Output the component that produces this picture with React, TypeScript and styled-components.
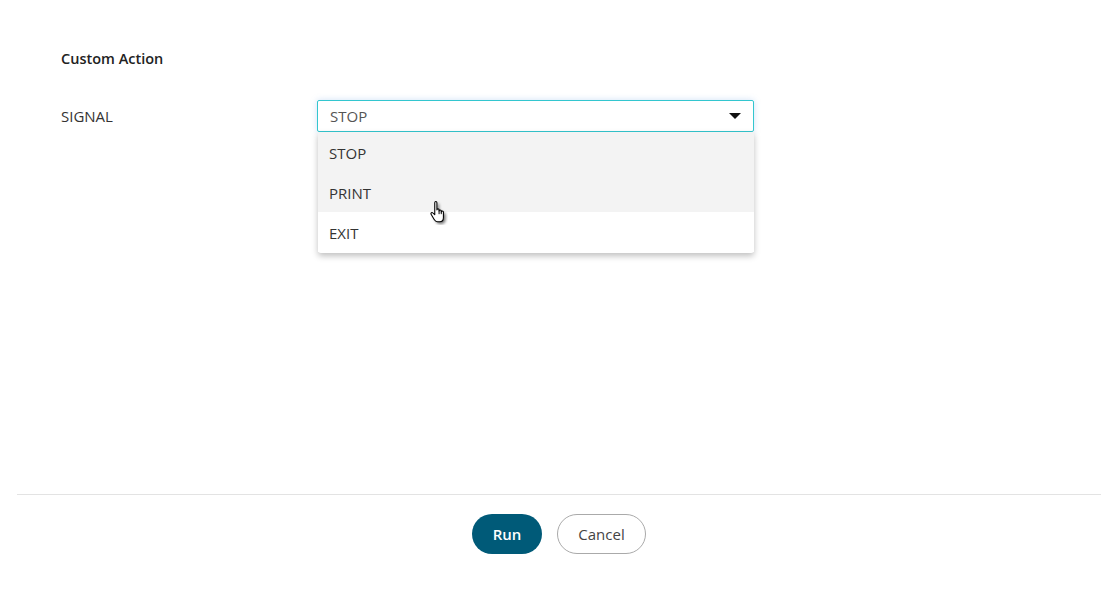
import React from "react";
import styled, { createGlobalStyle } from "styled-components";

const Global = createGlobalStyle`
  html, body { margin: 0; padding: 0; background: #fff; }
  body { font-family: "Open Sans", "Noto Sans", sans-serif; color: #333; }
`;

const options = ["STOP", "PRINT", "EXIT"];

const App = () => {
    return (
        <Page>
            <Global />
            <Body>
                <Title>Custom Action</Title>
                <Row>
                    <Label>SIGNAL</Label>
                    <SelectWrap>
                        <Select>
                            <span>STOP</span>
                            <Caret />
                        </Select>
                        <Menu>
                            {options.map((o, i) => (
                                <Item key={o} shaded={i < 2}>{o}</Item>
                            ))}
                            <Pointer>
                                <svg width="20" height="26" viewBox="0 0 18 24">
                                    <defs>
                                        <filter id="sh" x="-50%" y="-50%" width="200%" height="200%">
                                            <feGaussianBlur stdDeviation="1.3" />
                                        </filter>
                                    </defs>
                                    <path d="M6 3.5 C6 2 8 2 8 3.5 V10 C8 8.8 10 8.8 10 10 V11 C10 9.8 12 9.8 12 11 V12 C12 10.8 14 10.8 14 12 V17 C14 19.5 12.5 21 10.5 21 H8.5 C7 21 6.2 20.2 5.5 19 L2.6 14 C2 13 3.4 12 4.2 12.8 L6 14.5 Z" fill="#000" opacity="0.55" filter="url(#sh)" transform="translate(2 2)" />
                                    <path d="M6 3.5 C6 2 8 2 8 3.5 V10 C8 8.8 10 8.8 10 10 V11 C10 9.8 12 9.8 12 11 V12 C12 10.8 14 10.8 14 12 V17 C14 19.5 12.5 21 10.5 21 H8.5 C7 21 6.2 20.2 5.5 19 L2.6 14 C2 13 3.4 12 4.2 12.8 L6 14.5 Z" fill="#fff" stroke="#000" strokeWidth="1" strokeLinejoin="round" />
                                    <path d="M10 10.5 V14 M12 11.5 V14" stroke="#000" strokeWidth="0.9" />
                                </svg>
                            </Pointer>
                        </Menu>
                    </SelectWrap>
                </Row>
            </Body>
            <Footer>
                <RunButton>Run</RunButton>
                <CancelButton>Cancel</CancelButton>
            </Footer>
        </Page>
    );
};

const Page = styled.div`
    height: 590px;
    display: flex;
    flex-direction: column;
`;

const Body = styled.div`
    flex: 1;
    padding: 48px 0 0 61px;
`;

const Title = styled.div`
    font-size: 14.5px;
    font-weight: 600;
    color: #222;
    line-height: 21px;
`;

const Row = styled.div`
    display: flex;
    align-items: center;
    margin-top: 31px;
`;

const Label = styled.div`
    width: 256px;
    font-size: 15px;
    color: #333;
`;

const SelectWrap = styled.div`
    position: relative;
    width: 437px;
`;

const Select = styled.div`
    box-sizing: border-box;
    height: 32px;
    border: 1px solid #33c6cf;
    border-radius: 2px;
    box-shadow: 0 0 6px rgba(120, 170, 230, 0.35);
    display: flex;
    align-items: center;
    justify-content: space-between;
    padding: 0 12px 1px 12px;
    font-size: 15px;
    color: #555;
`;

const Caret = styled.span`
    width: 0;
    height: 0;
    margin-top: 1px;
    border-left: 6px solid transparent;
    border-right: 6px solid transparent;
    border-top: 6px solid #111;
`;

const Menu = styled.div`
    position: absolute;
    top: 32px;
    left: 1px;
    right: 0;
    background: #fff;
    border-radius: 0 0 3px 3px;
    box-shadow: 0 3px 6px rgba(0, 0, 0, 0.25);
    padding-bottom: 1px;
`;

const Item = styled.div<{ shaded: boolean }>`
    height: 40px;
    display: flex;
    align-items: center;
    padding: 1px 0 0 11px;
    box-sizing: border-box;
    font-size: 15px;
    color: #333;
    background: ${(p) => (p.shaded ? "#f3f3f3" : "#fff")};
`;

const Pointer = styled.div`
    position: absolute;
    left: 110px;
    top: 67px;
    line-height: 0;
`;

const Footer = styled.div`
    margin: 0 18px 0 17px;
    border-top: 1px solid #e3e3e3;
    height: 96px;
    box-sizing: border-box;
    display: flex;
    justify-content: center;
    align-items: flex-start;
    gap: 15px;
    padding-top: 19px;
`;

const RunButton = styled.button`
    width: 70px;
    height: 40px;
    border-radius: 20px;
    border: none;
    background: #005a78;
    color: #fff;
    font-family: "Open Sans", sans-serif;
    font-size: 15px;
    font-weight: 600;
`;

const CancelButton = styled.button`
    width: 89px;
    height: 40px;
    border-radius: 20px;
    border: 1px solid #aaa;
    background: #fff;
    color: #444;
    font-family: "Open Sans", sans-serif;
    font-size: 15px;
`;

export default App;
